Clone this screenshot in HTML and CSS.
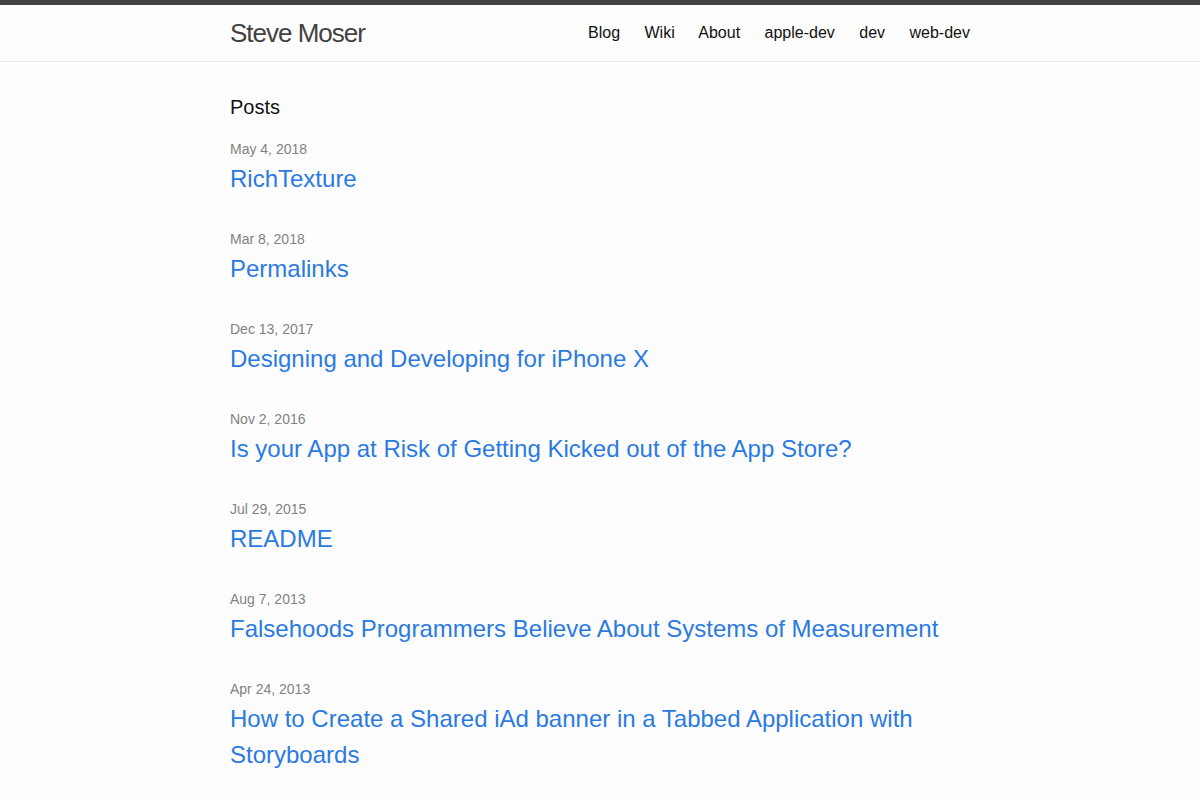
FILE: index.html
```html
<!DOCTYPE html>
<html lang="en">
<head>
<meta charset="utf-8">
<title>Steve Moser</title>
<link rel="stylesheet" href="styles.css">
</head>
<body>
<header class="site-header">
  <div class="wrapper header-inner">
    <a class="site-title" href="#">Steve Moser</a>
    <nav class="site-nav">
      <a class="page-link" href="#">Blog</a>
      <a class="page-link" href="#">Wiki</a>
      <a class="page-link" href="#">About</a>
      <a class="page-link" href="#">apple-dev</a>
      <a class="page-link" href="#">dev</a>
      <a class="page-link" href="#">web-dev</a>
    </nav>
  </div>
</header>
<main class="page-content">
  <div class="wrapper">
    <h2 class="post-list-heading">Posts</h2>
    <ul class="post-list">
      <li><span class="post-meta">May 4, 2018</span><h3><a class="post-link" href="#">RichTexture</a></h3></li>
      <li><span class="post-meta">Mar 8, 2018</span><h3><a class="post-link" href="#">Permalinks</a></h3></li>
      <li><span class="post-meta">Dec 13, 2017</span><h3><a class="post-link" href="#">Designing and Developing for iPhone X</a></h3></li>
      <li><span class="post-meta">Nov 2, 2016</span><h3><a class="post-link" href="#">Is your App at Risk of Getting Kicked out of the App Store?</a></h3></li>
      <li><span class="post-meta">Jul 29, 2015</span><h3><a class="post-link" href="#">README</a></h3></li>
      <li><span class="post-meta">Aug 7, 2013</span><h3><a class="post-link" href="#">Falsehoods Programmers Believe About Systems of Measurement</a></h3></li>
      <li><span class="post-meta">Apr 24, 2013</span><h3><a class="post-link" href="#">How to Create a Shared iAd banner in a Tabbed Application with Storyboards</a></h3></li>
    </ul>
  </div>
</main>
</body>
</html>
```
FILE: styles.css
```css
html, body { margin: 0; padding: 0; }
body {
  font-family: "Liberation Sans", Arial, Helvetica, sans-serif;
  font-size: 16px;
  line-height: 1.5;
  color: #111111;
  background: #fdfdfd;
}
a { text-decoration: none; }
.wrapper {
  max-width: 740px;
  margin: 0 auto;
  padding: 0 30px;
}
.site-header {
  border-top: 5px solid #424242;
  border-bottom: 1px solid #e8e8e8;
  min-height: 56px;
}
.header-inner {
  display: flex;
  justify-content: space-between;
  align-items: flex-start;
}
.site-title {
  font-size: 26px;
  font-weight: 300;
  line-height: 56px;
  letter-spacing: -1px;
  color: #424242;
}
.site-nav {
  line-height: 56px;
}
.page-link { color: #111111; }
.page-link:not(:last-child) { margin-right: 20px; }
.page-content { padding: 30px 0; }
.post-list-heading {
  font-size: 20px;
  font-weight: 400;
  line-height: 30px;
  margin: 0 0 15px;
}
.post-list {
  list-style: none;
  margin: 0;
  padding: 0;
}
.post-list li { margin-bottom: 30px; }
.post-meta {
  font-size: 14px;
  color: #828282;
}
.post-list h3 {
  margin: 0 0 15px;
  font-weight: 400;
  font-size: 24px;
  line-height: 36px;
}
.post-link { color: #2a7ae2; }
```
